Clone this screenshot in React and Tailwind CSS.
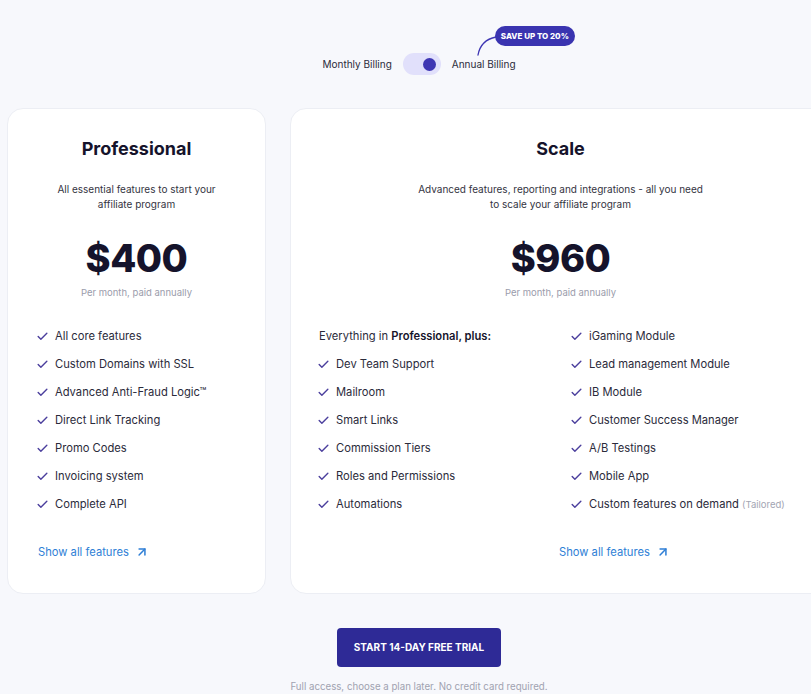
import React, { useState } from 'react';
import { Check, ArrowUpRight } from 'lucide-react';

const proFeatures = [
  'All core features',
  'Custom Domains with SSL',
  'Advanced Anti-Fraud Logic™',
  'Direct Link Tracking',
  'Promo Codes',
  'Invoicing system',
  'Complete API',
];

const scaleLeft = [
  'Dev Team Support',
  'Mailroom',
  'Smart Links',
  'Commission Tiers',
  'Roles and Permissions',
  'Automations',
];

const scaleRight = [
  'iGaming Module',
  'Lead management Module',
  'IB Module',
  'Customer Success Manager',
  'A/B Testings',
  'Mobile App',
];

const Feature = ({ children }) => (
  <li className="flex items-center h-[28px] text-[11.2px] text-[#2b2b3b] whitespace-nowrap">
    <Check size={13} strokeWidth={2.6} className="text-[#4b3f9d] ml-[-2px] mr-[6px] shrink-0" />
    <span>{children}</span>
  </li>
);

const ShowAll = ({ className }) => (
  <a href="#" className={`flex items-center text-[11.2px] text-[#2f7fd6] ${className}`}>
    Show all features
    <ArrowUpRight size={14} strokeWidth={2.6} className="ml-[6px]" />
  </a>
);

const PlanHeader = ({ title, desc, price }) => (
  <div className="flex flex-col items-center text-center">
    <h2 className="text-[18px] leading-[28px] font-bold text-[#15132b]">{title}</h2>
    <p className="mt-[19px] text-[10px] leading-[15px] text-[#34343f]">{desc}</p>
    <div className="mt-[26px] text-[38px] leading-[40px] font-extrabold text-[#15132b] tracking-[-0.5px]">
      {price}
    </div>
    <div className="mt-[8px] text-[9.5px] leading-[14px] text-[#9a9cab]">Per month, paid annually</div>
  </div>
);

export default function App() {
  const [annual, setAnnual] = useState(true);

  return (
    <div
      className="w-full min-h-[694px] overflow-hidden bg-[#f7f8fc]"
      style={{ fontFamily: 'Inter, "Noto Sans", sans-serif' }}
    >
      <div className="w-[824px] ml-[7px]">
        {/* Billing toggle */}
        <div className="flex items-center justify-center pt-[53px] h-[75px]">
          <span className="text-[10px] text-[#2b2b3b]">Monthly Billing</span>
          <button
            onClick={() => setAnnual(!annual)}
            className={`mx-[11px] w-[38px] h-[22px] rounded-full bg-[#e1e0fb] flex items-center px-[5px] ${
              annual ? 'justify-end' : 'justify-start'
            }`}
          >
            <span className="w-[13px] h-[13px] rounded-full bg-[#3e36b3]" />
          </button>
          <span className="relative text-[10px] text-[#2b2b3b]">
            Annual Billing
            <svg className="absolute left-[24px] top-[-22px]" width="22" height="22" viewBox="0 0 22 22" fill="none">
              <path d="M20 2 C 10 4, 4 9, 2 20" stroke="#3e36b3" strokeWidth="1.3" strokeLinecap="round" />
            </svg>
            <span className="absolute left-[43px] top-[-31px] whitespace-nowrap rounded-full bg-[#3a34b0] px-[6px] py-[4px] text-[8px] leading-[12px] font-extrabold text-white">
              SAVE UP TO 20%
            </span>
          </span>
        </div>

        {/* Plans */}
        <div className="mt-[33px] flex gap-[24px]">
          <div className="w-[259px] h-[486px] shrink-0 rounded-[16px] border border-[#eceef4] bg-white px-[30px] pt-[26px]">
            <PlanHeader
              title="Professional"
              desc={
                <>
                  All essential features to start your
                  <br />
                  affiliate program
                </>
              }
              price="$400"
            />
            <ul className="mt-[22px]">
              {proFeatures.map((f) => (
                <Feature key={f}>{f}</Feature>
              ))}
            </ul>
            <ShowAll className="mt-[26px]" />
          </div>

          <div className="flex-1 h-[486px] rounded-[16px] border border-[#eceef4] bg-white px-[28px] pt-[26px]">
            <PlanHeader
              title="Scale"
              desc={
                <>
                  Advanced features, reporting and integrations - all you need
                  <br />
                  to scale your affiliate program
                </>
              }
              price="$960"
            />
            <div className="mt-[22px] grid grid-cols-[253px_1fr]">
              <ul>
                <li className="flex items-center h-[28px] text-[11.2px] text-[#2b2b3b]">
                  Everything in&nbsp;<span className="font-semibold text-[#15132b]">Professional, plus:</span>
                </li>
                {scaleLeft.map((f) => (
                  <Feature key={f}>{f}</Feature>
                ))}
              </ul>
              <ul>
                {scaleRight.map((f) => (
                  <Feature key={f}>{f}</Feature>
                ))}
                <Feature>
                  Custom features on demand <span className="text-[9.5px] text-[#a3a5b3]">(Tailored)</span>
                </Feature>
              </ul>
            </div>
            <ShowAll className="mt-[26px] ml-[240px]" />
          </div>
        </div>

        {/* CTA */}
        <div className="flex flex-col items-center mt-[34px]">
          <button className="w-[164px] h-[39px] rounded-[4px] bg-[#2e2a96] text-[10px] font-bold text-white">
            START 14-DAY FREE TRIAL
          </button>
          <p className="mt-[13px] text-[9.7px] text-[#a0a2b0]">Full access, choose a plan later. No credit card required.</p>
        </div>
      </div>
    </div>
  );
}
